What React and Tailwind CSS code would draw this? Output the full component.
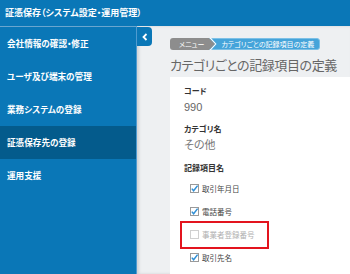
import React from "react";

const jp = { fontFamily: '"Noto Sans CJK JP", "Noto Sans", sans-serif', fontFeatureSettings: '"palt"' };

function Check({ checked }) {
  return (
    <svg width="9" height="9" viewBox="0 0 9 9" className="shrink-0">
      <rect x="0.5" y="0.5" width="8" height="8" fill="white" stroke={checked ? "#9a9a9a" : "#d0d0d0"} />
      {checked && (
        <polyline points="1.8,4.6 3.6,6.8 7.6,1.6" fill="none" stroke="#2f8fd6" strokeWidth="1.5" />
      )}
    </svg>
  );
}

function Row({ checked, label, highlight }) {
  return (
    <div className="relative flex items-center h-[23px] pl-[6px] gap-[3px]">
      {highlight && (
        <div className="absolute left-[-4px] top-[-2px] w-[89px] h-[28px] border-2 border-[#e3141e]" />
      )}
      <Check checked={checked} />
      <span className={"text-[7.5px] leading-none " + (checked ? "text-[#444]" : "text-[#b0b0b0]")}>{label}</span>
    </div>
  );
}

export default function App() {
  const items = ["会社情報の確認・修正", "ユーザ及び端末の管理", "業務システムの登録", "証憑保存先の登録", "運用支援"];
  return (
    <div className="w-[350px] h-[274px] overflow-hidden flex flex-col bg-[#0a77b7]" style={jp}>
      <div className="h-[26px] shrink-0 flex items-center pl-[5px] text-white font-bold text-[9px]">
        証憑保存（システム設定・運用管理）
      </div>
      <div className="flex flex-1 min-h-0">
        <div className="w-[137px] shrink-0 border-t border-[#6aa6cf] border-r border-r-[#4f9bd0] flex flex-col">
          {items.map((t, i) => (
            <div
              key={t}
              className={"h-[33px] flex items-center pl-[7px] text-white font-bold text-[8.6px] " + (i === 3 ? "bg-[#045b8c]" : "")}
            >
              {t}
            </div>
          ))}
        </div>
        <div className="relative flex-1 bg-[#eef0f2] flex flex-col pl-[33px] pt-[12px] shadow-[inset_2px_0_3px_rgba(0,0,0,0.12)]">
          <div className="absolute left-0 top-[1px] w-[15px] h-[19px] bg-[#0a77b7] rounded-r-[4px] flex items-center justify-center">
            <svg width="6" height="8" viewBox="0 0 6 8">
              <polyline points="4.5,1 1.5,4 4.5,7" fill="none" stroke="white" strokeWidth="1.8" />
            </svg>
          </div>
          <div className="flex h-[12px] text-white text-[7px] leading-none">
            <div className="bg-[#8d8d8d] rounded-l-[3px] pl-[9px] pr-[5px] flex items-center">メニュー</div>
            <svg width="8" height="12" viewBox="0 0 8 12" className="relative z-10 -mr-[8px] shrink-0">
              <polygon points="0,0 6,6 0,12" fill="#8d8d8d" />
              <polyline points="0.8,-0.5 6.8,6 0.8,12.5" fill="none" stroke="white" strokeWidth="1.1" />
            </svg>
            <div className="bg-[#45a4da] border border-[#7cc0e6] rounded-r-[3px] pl-[11px] pr-[5px] flex items-center">
              カテゴリごとの記録項目の定義
            </div>
          </div>
          <div className="mt-[5px] h-[19px] leading-[19px] text-[13px] tracking-[-0.4px] text-[#666] whitespace-nowrap">カテゴリごとの記録項目の定義</div>
          <div className="mt-[3px] flex-1 bg-white pl-[14px] pt-[9px] flex flex-col">
            <div className="text-[8px] font-bold text-[#333] leading-[10px]">コード</div>
            <div className="mt-[4px] text-[11px] text-[#666] leading-[14px]" style={{ fontFamily: '"Liberation Sans", sans-serif' }}>990</div>
            <div className="mt-[10px] text-[8px] font-bold text-[#333] leading-[10px]">カテゴリ名</div>
            <div className="mt-[3px] text-[11px] text-[#777] leading-[14px]">その他</div>
            <div className="mt-[12px] text-[8px] font-bold text-[#333] leading-[10px]">記録項目名</div>
            <div className="mt-[4px] flex flex-col">
              <Row checked label="取引年月日" />
              <Row checked label="電話番号" />
              <Row checked={false} label="事業者登録番号" highlight />
              <Row checked label="取引先名" />
            </div>
          </div>
        </div>
      </div>
    </div>
  );
}
